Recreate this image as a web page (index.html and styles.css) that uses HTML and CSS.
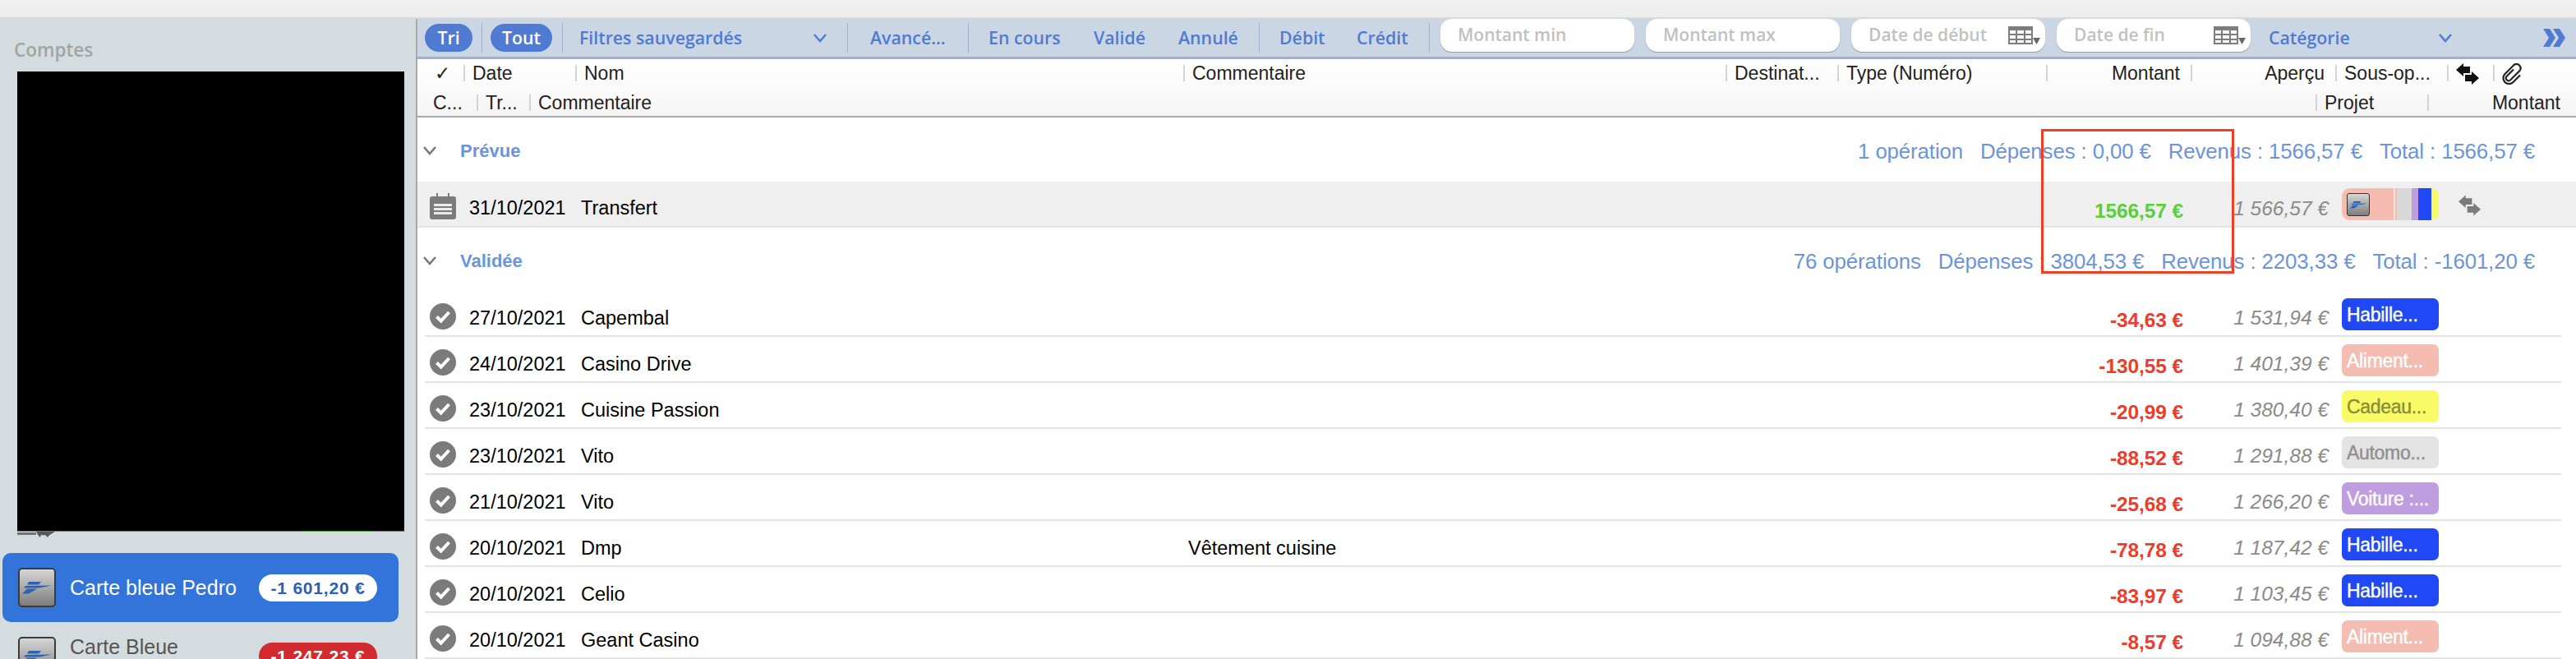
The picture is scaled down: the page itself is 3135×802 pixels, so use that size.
FILE: index.html
```html
<!DOCTYPE html>
<html lang="fr">
<head>
<meta charset="utf-8">
<title>Comptes</title>
<link rel="stylesheet" href="styles.css">
</head>
<body>
<svg class="defs" width="0" height="0" aria-hidden="true">
  <defs>
    <symbol id="check" viewBox="0 0 32 32"><circle cx="16" cy="16" r="16" fill="#7b7b7b"/><path d="M8.500 16.500l5.200 5.200L23.500 11" fill="none" stroke="#fff" stroke-width="4"/></symbol>
    <symbol id="logo" viewBox="0 0 36 16"><path d="M8 1h15l-3 3.500H6zM4 6l32-.5L21 8.500H2zM6 9.500h12L8 15.500H0z" fill="#2b62b4"/></symbol>
    <symbol id="swap" viewBox="0 0 28 26"><path d="M0 8L9 0v4h8v8H9v4z"/><path d="M28 18l-9 8v-4h-8v-8h8v-4z"/></symbol>
    <symbol id="grid" viewBox="0 0 39 22"><rect width="30" height="22" fill="#7d7d7d"/><path d="M2 5h7v4H2zM11 5h8v4h-8zM21 5h7v4h-7zM2 11h7v4H2zM11 11h8v4h-8zM21 11h7v4h-7zM2 17h7v3H2zM11 17h8v3h-8zM21 17h7v3h-7z" fill="#fff"/><path d="M30 14h9l-4.500 8z" fill="#666"/></symbol>
    <symbol id="chev" viewBox="0 0 16 11"><path d="M1 1l7 8 7-8" fill="none" stroke="currentColor" stroke-width="2.500"/></symbol>
  </defs>
</svg>
<div class="titlebar"></div>
<div class="app">
  <aside class="sidebar">
    <div class="side-title">Comptes</div>
    <div class="redacted"></div>
    <div class="remnant"><span class="rem-grey"></span><span class="rem-blob"></span><span class="rem-green"></span></div>
    <div class="account account-active">
      <span class="acc-icon"><svg class="acc-logo"><use href="#logo"/></svg></span>
      <span class="acc-name">Carte bleue Pedro</span>
      <span class="pill pill-white">-1 601,20 €</span>
    </div>
    <div class="account">
      <span class="acc-icon"><svg class="acc-logo"><use href="#logo"/></svg></span>
      <span class="acc-name acc-name-dim">Carte Bleue</span>
      <span class="pill pill-red">-1 247,23 €</span>
    </div>
  </aside>
  <main class="main">
    <div class="toolbar">
      <span class="btn btn-tri">Tri</span><i class="sep"></i>
      <span class="btn btn-tout">Tout</span><i class="sep"></i>
      <span>Filtres sauvegardés</span><svg class="tb-chev"><use href="#chev"/></svg><i class="sep"></i>
      <span>Avancé…</span><i class="sep"></i>
      <span>En cours</span><span>Validé</span><span>Annulé</span><i class="sep"></i>
      <span>Débit</span><span>Crédit</span><i class="sep"></i>
      <span class="field">Montant min</span>
      <span class="field">Montant max</span>
      <span class="field">Date de début<svg class="grid-ic"><use href="#grid"/></svg></span>
      <span class="field">Date de fin<svg class="grid-ic"><use href="#grid"/></svg></span>
      <span>Catégorie</span><svg class="tb-chev"><use href="#chev"/></svg>
      <svg class="more" viewBox="0 0 27 22"><path d="M0 0h8l7 11-7 11H0l7-11zM12 0h8l7 11-7 11h-8l7-11z"/></svg>
    </div>
    <div class="thead">
      <div class="thead-row thead-a">
        <span class="th th-first">✓</span>
        <span class="th">Date</span>
        <span class="th">Nom</span>
        <span class="th">Commentaire</span>
        <span class="th">Destinat...</span>
        <span class="th">Type (Numéro)</span>
        <span class="th th-right">Montant</span>
        <span class="th th-right">Aperçu</span>
        <span class="th">Sous-op...</span>
        <span class="th"><svg class="th-swap"><use href="#swap"/></svg></span>
        <span class="th"><svg class="clip" viewBox="0 0 26 26"><path d="M14 7.500L5.500 16a3.200 3.200 0 0 0 4.500 4.500L21.500 9a5 5 0 0 0-7-7L3.500 13a7 7 0 0 0 10 10L22 14.500" fill="none" stroke="#222" stroke-width="2.200"/></svg></span>
      </div>
      <div class="thead-row thead-b">
        <span class="th th-first-b">C...</span>
        <span class="th">Tr...</span>
        <span class="th">Commentaire</span>
        <span class="th">Projet</span>
        <span class="th th-right th-end">Montant</span>
      </div>
    </div>
    <section class="group-head group-a">
      <svg class="g-chev"><use href="#chev"/></svg><span class="g-name">Prévue</span>
      <div class="g-sum"><span>1 opération</span><span>Dépenses : 0,00 €</span><span>Revenus : 1566,57 €</span><span>Total : 1566,57 €</span></div>
    </section>
    <div class="row row-planned">
      <i></i>
      <svg class="st-icon" viewBox="0 0 32 32"><path d="M8 0h2v4h12V0h2v4h5a3 3 0 0 1 3 3v22a3 3 0 0 1-3 3H3a3 3 0 0 1-3-3V7a3 3 0 0 1 3-3h5z" fill="#7b7b7b"/><path d="M5 13h22v3H5zM5 18h22v3H5zM5 23h22v3H5z" fill="#fff" fill-opacity=".85"/></svg>
      <span class="c-text">31/10/2021</span><span class="c-text">Transfert</span><span></span>
      <span class="c-amt pos">1566,57 €</span><span class="c-bal">1 566,57 €</span>
      <span class="preview"><span class="pv-icon"><svg class="pv-logo"><use href="#logo"/></svg></span><i class="pv-a"></i><i class="pv-gap"></i><i class="pv-a2"></i><i class="pv-b"></i><i class="pv-c"></i><i class="pv-d"></i></span>
      <i></i><svg class="row-swap"><use href="#swap"/></svg>
    </div>
    <section class="group-head group-b">
      <svg class="g-chev"><use href="#chev"/></svg><span class="g-name">Validée</span>
      <div class="g-sum"><span>76 opérations</span><span>Dépenses : 3804,53 €</span><span>Revenus : 2203,33 €</span><span>Total : -1601,20 €</span></div>
    </section>
    <div class="row"><i></i><svg class="st-icon"><use href="#check"/></svg><span class="c-text">27/10/2021</span><span class="c-text">Capembal</span><span></span><span class="c-amt neg">-34,63 €</span><span class="c-bal">1 531,94 €</span><span class="tag t-blue">Habille...</span></div>
    <div class="row"><i></i><svg class="st-icon"><use href="#check"/></svg><span class="c-text">24/10/2021</span><span class="c-text">Casino Drive</span><span></span><span class="c-amt neg">-130,55 €</span><span class="c-bal">1 401,39 €</span><span class="tag t-pink">Aliment...</span></div>
    <div class="row"><i></i><svg class="st-icon"><use href="#check"/></svg><span class="c-text">23/10/2021</span><span class="c-text">Cuisine Passion</span><span></span><span class="c-amt neg">-20,99 €</span><span class="c-bal">1 380,40 €</span><span class="tag t-yellow">Cadeau...</span></div>
    <div class="row"><i></i><svg class="st-icon"><use href="#check"/></svg><span class="c-text">23/10/2021</span><span class="c-text">Vito</span><span></span><span class="c-amt neg">-88,52 €</span><span class="c-bal">1 291,88 €</span><span class="tag t-grey">Automo...</span></div>
    <div class="row"><i></i><svg class="st-icon"><use href="#check"/></svg><span class="c-text">21/10/2021</span><span class="c-text">Vito</span><span></span><span class="c-amt neg">-25,68 €</span><span class="c-bal">1 266,20 €</span><span class="tag t-purple">Voiture :...</span></div>
    <div class="row"><i></i><svg class="st-icon"><use href="#check"/></svg><span class="c-text">20/10/2021</span><span class="c-text">Dmp</span><span class="c-text">Vêtement cuisine</span><span class="c-amt neg">-78,78 €</span><span class="c-bal">1 187,42 €</span><span class="tag t-blue">Habille...</span></div>
    <div class="row"><i></i><svg class="st-icon"><use href="#check"/></svg><span class="c-text">20/10/2021</span><span class="c-text">Celio</span><span></span><span class="c-amt neg">-83,97 €</span><span class="c-bal">1 103,45 €</span><span class="tag t-blue">Habille...</span></div>
    <div class="row"><i></i><svg class="st-icon"><use href="#check"/></svg><span class="c-text">20/10/2021</span><span class="c-text">Geant Casino</span><span></span><span class="c-amt neg">-8,57 €</span><span class="c-bal">1 094,88 €</span><span class="tag t-pink">Aliment...</span></div>
  </main>
</div>
<div class="annotation"></div>
</body>
</html>
```
FILE: styles.css
```css
* { box-sizing: border-box; }
html, body { margin: 0; height: 802px; overflow: hidden; background: #fff; }
body { font-family: "Liberation Sans", Arial, sans-serif; font-size: 23px; color: #000; position: relative; }
.defs { position: absolute; }
i { font-style: normal; }

.titlebar { height: 23px; background: linear-gradient(#f1f1f0, #ebecec); border-bottom: 2px solid #d9d9d9; }
.app { display: flex; height: 779px; overflow: hidden; }

.sidebar { flex: 0 0 508px; background: #d5dcdf; border-right: 2px solid #a9a9a9; }
.side-title { margin: 26px 0 0 17px; height: 24px; font: 600 22.500px/24px "Open Sans", sans-serif; color: #a0a5a7; }
.redacted { margin: 14px 0 0 21px; width: 471px; height: 560px; background: #000; border-bottom: 1px solid #777; }
.remnant { display: flex; align-items: flex-start; height: 26px; margin-left: 21px; }
.rem-grey { width: 23px; height: 3px; margin-top: 1px; background: #6f7476; }
.rem-blob { width: 23px; height: 7px; background: #55595b; clip-path: polygon(0 0, 100% 0, 70% 60%, 60% 100%, 50% 60%, 25% 60%, 20% 100%, 10% 60%); }
.rem-green { width: 84px; height: 1px; margin-top: -1px; margin-left: 300px; background: #4a9a3a; }
.account { display: flex; align-items: center; width: 482px; height: 84px; margin-left: 3px; padding-left: 19px; border-radius: 10px; }
.account-active { background: #3374db; }
.account + .account { margin-top: 18px; height: 48px; align-items: flex-start; }
.acc-icon { flex: 0 0 46px; height: 48px; display: flex; align-items: center; justify-content: center; border: 2px solid #3b3b3b; border-radius: 5px; background: linear-gradient(#d6d6d6, #7d7d7d); }
.acc-logo { width: 36px; height: 16px; }
.acc-name { flex: 0 0 230px; margin-left: 17px; color: #fff; font-size: 25px; }
.acc-name-dim { color: #555; margin-top: -2px; }
.pill { flex: 0 0 144px; height: 33px; border-radius: 17px; text-align: center; font-size: 21px; line-height: 33px; font-weight: 700; letter-spacing: .8px; }
.pill-white { background: #fff; color: #2d5fb8; }
.pill-red { background: #d22b2f; color: #fff; margin-top: 7px; }

.main { flex: 1; min-width: 0; }
.toolbar { display: grid; align-items: center; height: 49px; padding-left: 9px; background: #cad6e4; border-bottom: 3px solid #a0b0cf;
  grid-template-columns: 69px 11px 87px 21px 285px 41px 28px 119px 25px 128px 103px 98px 25px 94px 88px 14px 250px 250px 250px 258px 207px 127px 30px;
  font: 600 21.300px/24px "Open Sans", sans-serif; color: #4f7bd2; white-space: nowrap; }
.btn { height: 34px; border-radius: 17px; background: #4f7bd2; color: #fff; text-align: center; line-height: 33px; }
.btn-tri { width: 58px; }
.btn-tout { width: 75px; }
.sep { width: 1px; height: 36px; background: #9fb2cc; }
.tb-chev { width: 16px; height: 11px; color: #4f7bd2; }
.field { position: relative; width: 236px; height: 40px; margin-top: -6px; padding-left: 21px; border-radius: 14px; background: #fff; box-shadow: 0 1px 1px #9a9a9a; color: #c1c1c1; font-size: 21px; line-height: 38px; }
.grid-ic { position: absolute; right: 6px; top: 9px; width: 39px; height: 22px; }
.more { width: 27px; height: 22px; fill: #4f7bd2; }

.thead { height: 71px; background: linear-gradient(#fff, #f5f5f5); border-bottom: 2px solid #aaa; color: #222; }
.thead-row { display: grid; }
.thead-a { padding-top: 7px; height: 43px; grid-template-columns: 56px 136px 740px 660px 136px 254px 176px 176px 136px 56px 101px; }
.thead-b { grid-template-columns: 72px 64px 2174px 136px 181px; }
.th { height: 20px; padding-left: 9px; border-left: 2px solid #d4d4d4; line-height: 21px; white-space: nowrap; }
.th-first { border-left: 0; padding-left: 21px; }
.th-first-b { border-left: 0; padding-left: 19px; }
.th-right { text-align: right; padding-right: 13px; }
.th-end { padding-right: 19px; }
.th-swap { width: 28px; height: 26px; margin-top: -2px; fill: #111; }
.clip { width: 26px; height: 26px; margin-top: -2px; }

.group-head { display: flex; padding: 22px 50px 0 7px; font-size: 25.800px; color: #6b94dc; height: 78px; align-items: flex-start; line-height: 38px; }
.group-b { height: 77px; }
.g-chev { width: 16px; height: 11px; margin-top: 13px; color: #777; }
.g-name { margin-left: 29px; font-size: 22px; font-weight: 700; }
.g-sum { display: flex; gap: 21px; margin-left: auto; letter-spacing: -.1px; }

.row { display: grid; align-items: start; height: 56px; margin: 0 18px 0 9px; border-bottom: 2px solid #e3e3e3; font-size: 23.500px;
  grid-template-columns: 6px 32px 16px 136px 739px 600px 611px 177px 16px 118px; }
.row > .tag { grid-column: 10; }
.row-planned { margin: 0; padding-left: 9px; background: #efefef; grid-template-columns: 6px 32px 16px 136px 739px 600px 611px 177px 16px 118px 24px 27px; }
.row-planned > .preview { grid-column: 10; }
.st-icon { width: 32px; height: 32px; margin-top: 15px; grid-column: 2; }
.row-planned .st-icon { margin-top: 14px; }
.c-text { padding-top: 18px; line-height: 30px; white-space: nowrap; }
.row-planned .c-text { padding-top: 17px; }
.row > .c-text:nth-of-type(1) { grid-column: 4; }
.c-amt { grid-column: 7; padding-top: 21px; line-height: 30px; text-align: right; font-weight: 700; font-size: 24.500px; letter-spacing: -.1px; }
.pos { color: #5bcf3a; }
.neg { color: #ee3b2e; }
.c-bal { grid-column: 8; padding-top: 18px; line-height: 30px; text-align: right; font-style: italic; font-size: 24.500px; color: #8a8a8a; }
.tag { height: 39px; margin-top: 9px; padding-left: 6px; border-radius: 7px; font-size: 23px; line-height: 41px; -webkit-text-stroke: .4px; letter-spacing: -.3px; white-space: nowrap; }
.t-blue { background: #2148f5; color: #fff; }
.t-pink { background: #f5bcb1; color: #fff; }
.t-yellow { background: #f8fb66; color: #8c8c38; }
.t-grey { background: #e3e3e3; color: #8f8f8f; }
.t-purple { background: #c09de0; color: #fff; }

.preview { display: flex; height: 39px; margin-top: 8px; border-radius: 10px; overflow: hidden; position: relative; }
.pv-a { width: 63px; background: #f5bcb1; }
.pv-gap { width: 2px; background: #f0e4e0; }
.pv-a2 { width: 2px; background: #f5bcb1; }
.pv-b { width: 18px; background: #d8d8d8; }
.pv-c { width: 8px; background: #c09de0; }
.pv-d { flex: 1; background: linear-gradient(90deg, #2148f5 16px, #f8fb66 16px); }
.pv-icon { position: absolute; left: 6px; top: 6px; width: 28px; height: 28px; display: flex; align-items: center; justify-content: center; border: 1.500px solid #333; border-radius: 3px; background: linear-gradient(#d6d6d6, #7d7d7d); }
.pv-logo { width: 21px; height: 10px; }
.row-swap { grid-column: 12; width: 27px; height: 26px; margin-top: 16px; fill: #7b7b7b; }

.annotation { position: absolute; left: 2484px; top: 157px; width: 235px; height: 176px; border: 3px solid #ef4026; }
```
